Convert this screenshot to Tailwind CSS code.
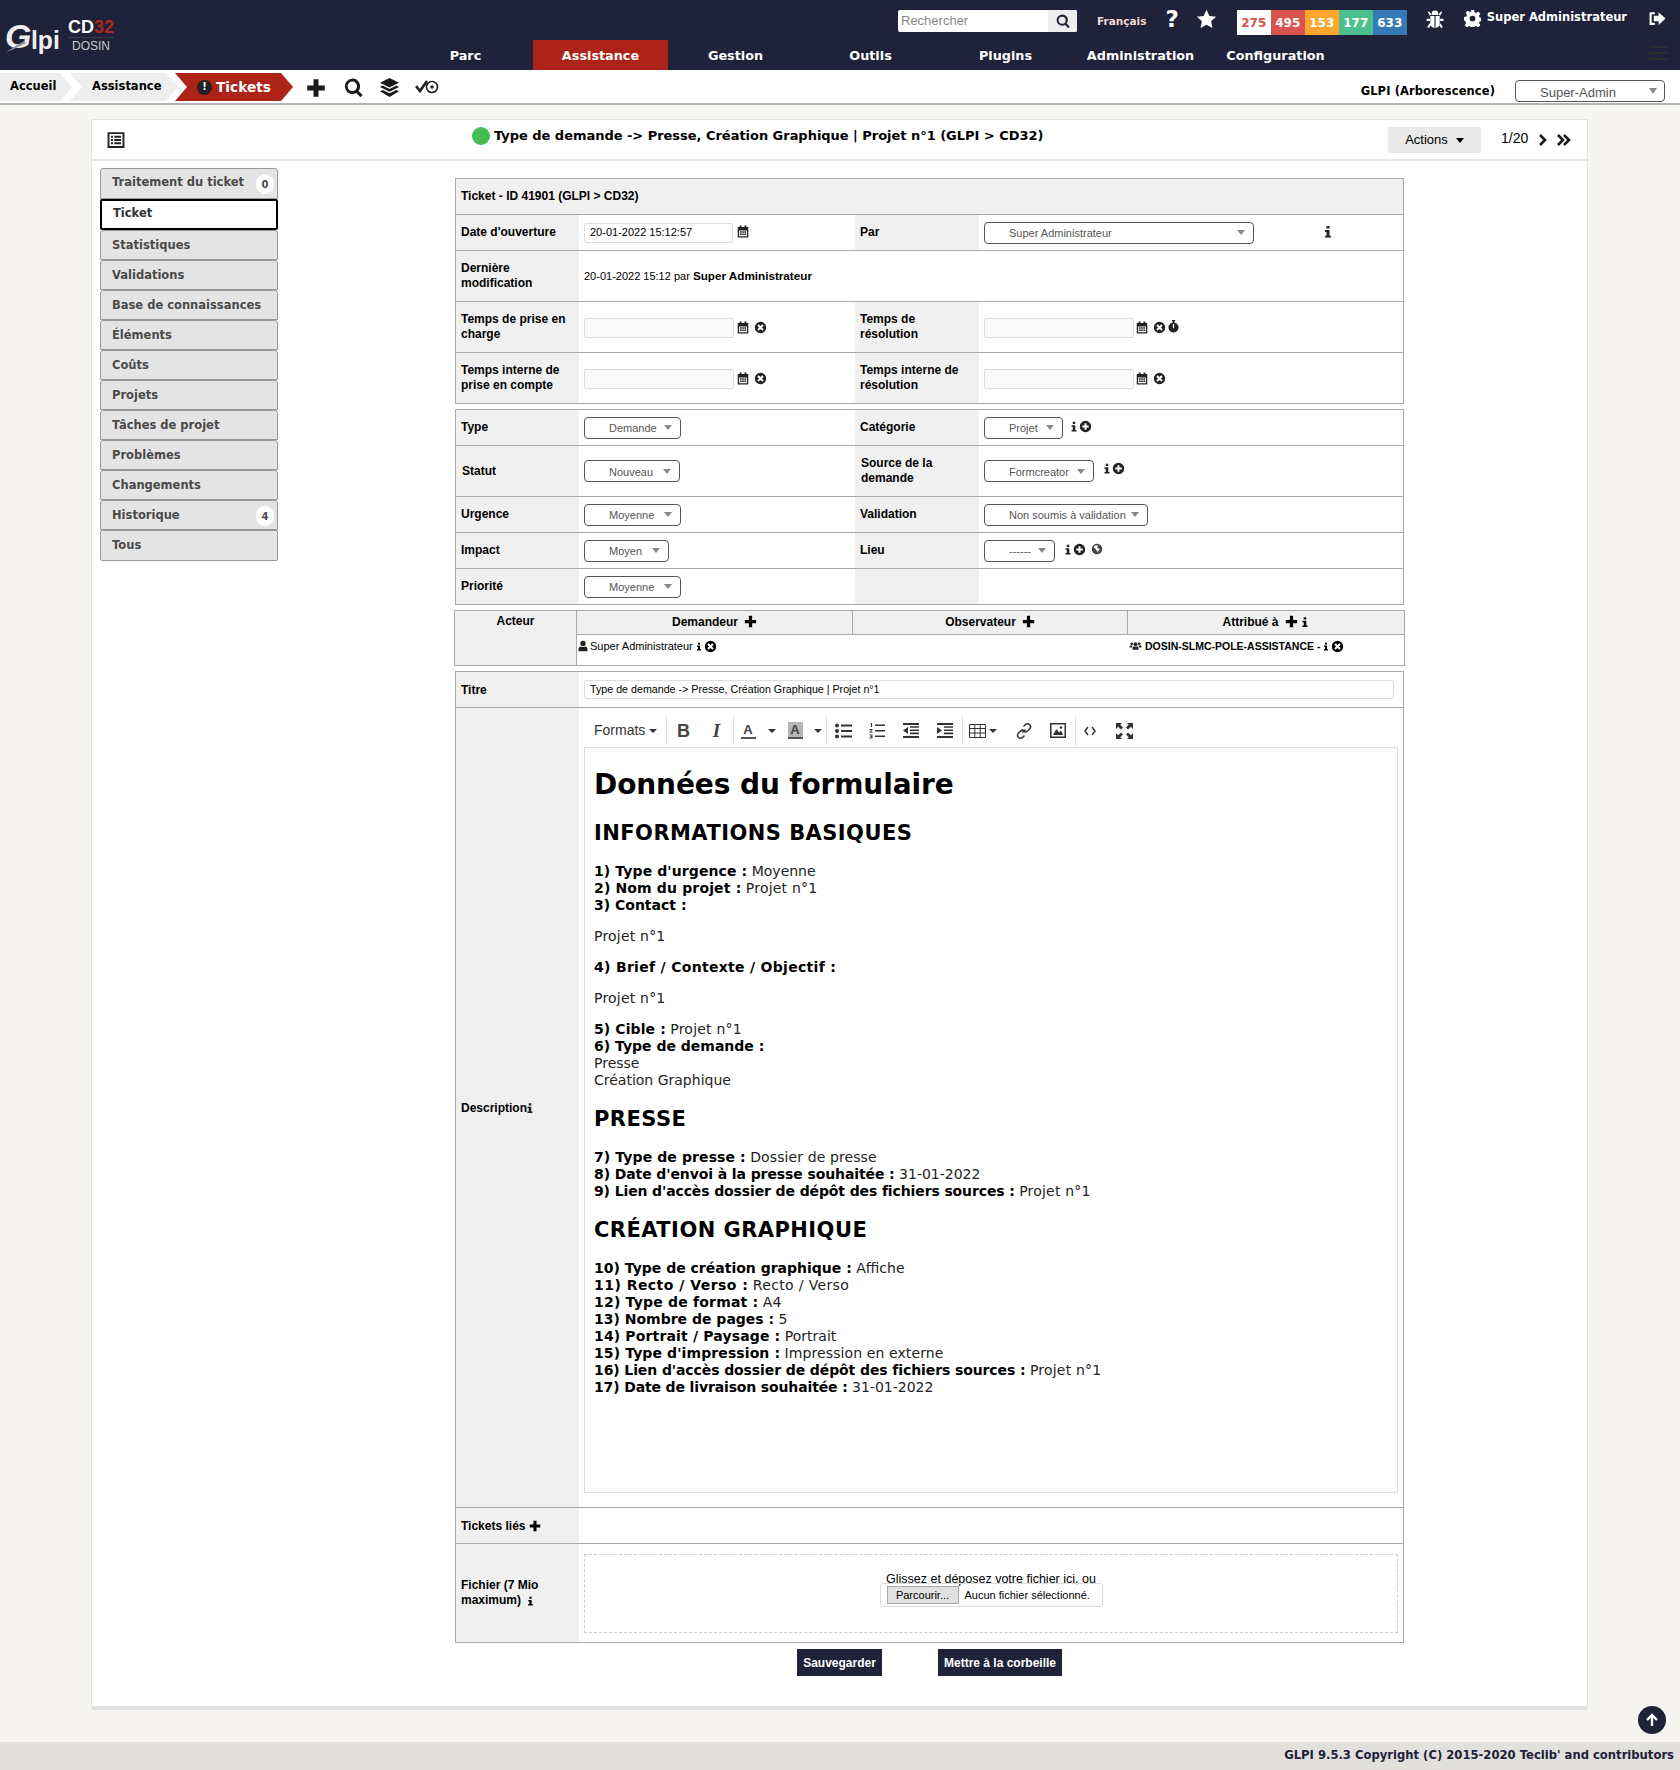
<!DOCTYPE html>
<html lang="fr">
<head>
    <meta charset="UTF-8">
    <meta name="viewport" content="width=device-width, initial-scale=1.0">
    <script src="https://cdn.jsdelivr.net/npm/@tailwindcss/browser@4"></script>
    <title>Ticket - GLPI</title>
</head>
<body class="bg-[#f6f5f2] [font-family:'Liberation_Sans',Arial,sans-serif] text-[12px] text-black h-[1770px] relative overflow-hidden">

    <!-- icon set -->
    <svg class="hidden">
        <symbol id="i-plus" viewBox="0 0 16 16"><path d="M6 1h4v5h5v4h-5v5H6v-5H1V6h5z"/></symbol>
        <symbol id="i-info" viewBox="0 0 16 16"><path d="M6 0.500h4v3.500H6zM4 6h6v7.500h2V16H4v-2.500h2V8.500H4z"/></symbol>
        <symbol id="i-plus-c" viewBox="0 0 16 16"><path fill-rule="evenodd" d="M8 1a7 7 0 1 1 0 14A7 7 0 0 1 8 1zM6.800 4v2.800H4v2.400h2.800V12h2.400V9.200H12V6.800H9.200V4z"/></symbol>
        <symbol id="i-x-c" viewBox="0 0 16 16"><path fill-rule="evenodd" d="M8 1a7 7 0 1 1 0 14A7 7 0 0 1 8 1zM5.700 4L4 5.700 6.300 8 4 10.300 5.700 12 8 9.700 10.300 12 12 10.300 9.700 8 12 5.700 10.300 4 8 6.300z"/></symbol>
        <symbol id="i-cal" viewBox="0 0 16 16"><path fill-rule="evenodd" d="M3.500 0h2.500v2h4V0h2.500v2H15v14H1V2h2.500zM2.800 6.500v7.700h10.400V6.500zM4 7.800h2.200v1.800H4zM6.900 7.800h2.200v1.800H6.900zM9.800 7.800H12v1.800H9.800zM4 10.800h2.200v1.800H4zM6.900 10.800h2.200v1.800H6.900zM9.800 10.800H12v1.800H9.800z"/></symbol>
        <symbol id="i-watch" viewBox="0 0 16 16"><path fill-rule="evenodd" d="M6 0h4v1.500H9v1.600A6.200 6.200 0 1 1 7 3.100V1.500H6zM7.200 5v5h1.600V5z"/></symbol>
        <symbol id="i-globe" viewBox="0 0 16 16"><path fill-rule="evenodd" d="M8 1a7 7 0 1 1 0 14A7 7 0 0 1 8 1zM5 3.500L3.500 6 6 7.500l1 2 1.500 1v2l2-2.500 1.500-2-2.500-1L8 6 9.500 4 8 3z"/></symbol>
        <symbol id="i-user" viewBox="0 0 16 16"><circle cx="8" cy="4.500" r="3.500"/><path d="M2 15v-3c0-2.500 2-3.500 3.500-3.500 1.500 1 3.500 1 5 0C12 8.500 14 9.500 14 12v3z"/></symbol>
        <symbol id="i-users" viewBox="0 0 16 16"><circle cx="8" cy="5.500" r="2.600"/><circle cx="3" cy="5" r="1.800"/><circle cx="13" cy="5" r="1.800"/><path d="M4 13v-2.500C4 9 5.200 8.500 6 8.500h4c.8 0 2 .5 2 2V13zM0 10V8.500C0 7.500.8 7.200 1.500 7.200H4L3 10zM16 10V8.500c0-1-.8-1.300-1.500-1.300H12l1 2.800z"/></symbol>
        <symbol id="i-search" viewBox="0 0 16 16"><path fill-rule="evenodd" d="M7 0.500a6.500 6.500 0 0 1 5.200 10.400l3.500 3.500-1.800 1.800-3.500-3.500A6.500 6.500 0 1 1 7 0.500zM7 3a4 4 0 1 0 0 8 4 4 0 0 0 0-8z"/></symbol>
        <symbol id="i-layers" viewBox="0 0 16 16"><path d="M8 0l8 4-8 4-8-4zM2.200 6.300L8 9.200l5.800-2.900L16 7.500l-8 4-8-4zM2.200 10L8 12.900l5.800-2.900 2.200 1.200-8 4.800-8-4.800z"/></symbol>
        <symbol id="i-list" viewBox="0 0 16 16"><path fill-rule="evenodd" d="M0.500 1h15v14h-15zM2.200 2.700v10.600h11.600V2.700zM3.500 4.200h1.800V6H3.500zM6.500 4.200h6V6h-6zM3.500 7.100h1.800v1.800H3.500zM6.500 7.100h6v1.800h-6zM3.500 10h1.800v1.800H3.500zM6.500 10h6v1.800h-6z"/></symbol>
        <symbol id="i-star" viewBox="0 0 16 16"><path d="M8 0.500l2.300 5 5.400.6-4 3.700 1.100 5.400L8 12.500l-4.800 2.700 1.100-5.400-4-3.700 5.400-.6z"/></symbol>
        <symbol id="i-bug" viewBox="0 0 16 16"><path d="M5 3.500a3 3 0 0 1 6 0V4.500H5zM3.800 5.300h3.700V16C5.300 16 3.800 14 3.800 12zM8.500 5.300h3.700V12c0 2-1.500 4-3.700 4zM1.500 1.500h1.500l1.800 2.500-1.400 1zM14.500 1.500H13L11.200 4l1.400 1zM0.500 7.700h3v2h-3zM12.500 7.700h3v2h-3zM1 15l2.300-3.300 1.200 1.300-2 3zM15 15l-2.300-3.300-1.200 1.300 2 3z"/></symbol>
        <symbol id="i-cog" viewBox="0 0 16 16"><path fill-rule="evenodd" d="M6.500 0h3l.4 2.200 1.500.6L13.300 1.500l2.100 2.100-1.300 1.900.6 1.500 2.200.4v3l-2.200.4-.6 1.500 1.300 1.900-2.100 2.100-1.900-1.300-1.500.6-.4 2.200h-3l-.4-2.200-1.500-.6-1.900 1.300L.6 14.300l1.300-1.900-.6-1.500L0 9.500v-3l2.200-.4.6-1.500L1.500 2.700l2.100-2.100 1.900 1.300 1.500-.6zM8 5.300a2.700 2.700 0 1 0 0 5.400 2.700 2.700 0 0 0 0-5.400z"/></symbol>
        <symbol id="i-out" viewBox="0 0 16 16"><path d="M6 2v2H3v8h3v2H1V2zM9.500 2L16 8l-6.500 6v-3.500H5v-5h4.500z"/></symbol>
    </svg>

    <!-- top bar -->
    <header class="relative h-[70px] bg-[#1f2238] [font-family:'DejaVu_Sans',sans-serif] text-white">
        <div class="absolute left-[5px] top-[17px] flex items-center">
            <div class="relative [font-family:'Liberation_Sans',sans-serif] text-[#eeeeee] leading-none flex items-end w-[63px]">
                <span class="text-[34px] font-bold italic">G</span><span class="text-[26px] font-bold origin-left scale-x-[0.95]">lpi</span>
                <svg class="absolute left-[1px] top-[22px] w-[20px] h-[12px]" viewBox="0 0 20 12"><path d="M0 11L18 0 20 2 6 9z" fill="#8a8c98"/></svg>
            </div>
            <div class="flex flex-col items-center w-[46px] [font-family:'Liberation_Sans',sans-serif]">
                <span class="text-[18px] font-bold leading-[20px] border-b border-[#3a3e55] w-full text-center">CD<span class="text-[#ad2a1e]">32</span></span>
                <span class="text-[12px] leading-[17px] text-[#c8c8c8]">DOSIN</span>
            </div>
        </div>

        <div class="flex h-[40px] items-start pl-[898px]">
            <div class="mt-[10px] flex h-[22px] w-[179px] rounded-[2px] overflow-hidden bg-white">
                <span class="flex-1 pl-[3px] [font-family:'Liberation_Sans',sans-serif] text-[13px] leading-[22px] text-[#888888]">Rechercher</span>
                <span class="flex w-[29px] items-center justify-center bg-[#eeeeee]"><svg class="w-[14px] h-[14px] fill-[#1f2238]"><use href="#i-search"/></svg></span>
            </div>
            <span class="ml-[20px] mt-[15px] text-[10.500px] font-bold leading-[13px] text-[#f5d8cf]">Français</span>
            <span class="ml-[19px] mt-[6px] text-[23px] font-bold leading-[26px]">?</span>
            <svg class="ml-[17px] mt-[9px] w-[21px] h-[20px] fill-white"><use href="#i-star"/></svg>
            <div class="ml-[20px] mt-[10px] flex h-[25px] text-[12px] font-bold leading-[26px] text-center">
                <span class="w-[34px] bg-white text-[#d9534f]">275</span>
                <span class="w-[34px] bg-[#d9534f]">495</span>
                <span class="w-[34px] bg-[#ffa72c]">153</span>
                <span class="w-[34px] bg-[#4cbf8f]">177</span>
                <span class="w-[34px] bg-[#337ab7]">633</span>
            </div>
            <svg class="ml-[19px] mt-[10px] w-[18px] h-[18px] fill-white"><use href="#i-bug"/></svg>
            <svg class="ml-[20px] mt-[10px] w-[17px] h-[17px] fill-white"><use href="#i-cog"/></svg>
            <span class="ml-[6px] mt-[10px] text-[11.500px] font-bold leading-[14px]">Super Administrateur</span>
            <svg class="ml-[21px] mt-[10px] w-[18px] h-[17px] fill-white"><use href="#i-out"/></svg>
        </div>

        <nav class="flex h-[30px] pl-[398px] text-[12.800px] font-bold leading-[31px] text-center">
            <a class="w-[135px]">Parc</a>
            <a class="w-[135px] bg-[#ad2318]">Assistance</a>
            <a class="w-[135px]">Gestion</a>
            <a class="w-[135px]">Outils</a>
            <a class="w-[135px]">Plugins</a>
            <a class="w-[135px]">Administration</a>
            <a class="w-[135px]">Configuration</a>
        </nav>
        <div class="absolute left-[1650px] top-[46px] flex w-[18px] flex-col gap-[4px]">
            <span class="h-[2px] bg-[#2c2c2c]"></span>
            <span class="h-[2px] bg-[#2c2c2c]"></span>
            <span class="h-[2px] bg-[#2c2c2c]"></span>
        </div>
    </header>

    <!-- breadcrumb -->
    <div class="flex h-[35px] items-start border-b-2 border-[#b4b4b4] bg-white [font-family:'DejaVu_Sans',sans-serif]">
        <div class="mt-[3px] flex h-[28px] items-center text-[11.500px] font-bold">
            <a class="flex h-full w-[72px] items-center bg-[#eeeeee] pl-[10px] [clip-path:polygon(0_0,60px_0,72px_50%,60px_100%,0_100%)]">Accueil</a>
            <a class="-ml-[2px] flex h-full w-[108px] items-center bg-[#eeeeee] pl-[22px] [clip-path:polygon(0_0,96px_0,108px_50%,96px_100%,0_100%,12px_50%)]">Assistance</a>
            <a class="-ml-[3px] flex h-full w-[118px] items-center bg-[#ad2318] pl-[22px] text-[13.700px] text-white [clip-path:polygon(0_0,106px_0,118px_50%,106px_100%,0_100%,12px_50%)]">
                <span class="mr-[4px] flex h-[15px] w-[15px] items-center justify-center rounded-full bg-[#222222] text-[10px] leading-none">!</span>Tickets
            </a>
        </div>
        <svg class="ml-[13px] mt-[8px] w-[20px] h-[20px] fill-[#1a1a1a]"><use href="#i-plus"/></svg>
        <svg class="ml-[18px] mt-[8px] w-[19px] h-[19px] fill-[#1a1a1a]"><use href="#i-search"/></svg>
        <svg class="ml-[17px] mt-[8px] w-[19px] h-[19px] fill-[#1a1a1a]"><use href="#i-layers"/></svg>
        <svg class="ml-[16px] mt-[10px] w-[24px] h-[14px]" viewBox="0 0 24 14"><path d="M1 6l4 5 7-10" fill="none" stroke="#222" stroke-width="2.600"/><circle cx="17" cy="7" r="5.500" fill="none" stroke="#222" stroke-width="1.600"/><circle cx="17" cy="7" r="1.800" fill="#222"/></svg>
        <span class="ml-auto mt-[14px] text-[11.500px] font-bold leading-[14px] tracking-[0.1px]">GLPI (Arborescence)</span>
        <div class="ml-[20px] mr-[15px] mt-[10px] flex h-[22px] w-[150px] items-center justify-between rounded-[4px] border border-[#555555] pl-[24px] pr-[7px] pt-[3px] [font-family:'Liberation_Sans',sans-serif] text-[13px] text-[#555555]">
            Super-Admin<span class="-mt-[4px] h-0 w-0 border-x-[4px] border-t-[6px] border-x-transparent border-t-[#888888]"></span>
        </div>
    </div>

    <!-- main card -->
    <main class="ml-[91px] mt-[14px] w-[1497px] h-[1591px] border-x border-t border-[#e4e4e4] bg-white border-b-[4px] border-b-[#e0e0e0] rounded-b-[2px]">
        <div class="relative flex h-[41px] border-b-2 border-[#e8e8e8]">
            <svg class="ml-[15px] mt-[11px] w-[18px] h-[18px] fill-[#222222]"><use href="#i-list"/></svg>
            <div class="ml-[347px] mt-[6px] flex items-start [font-family:'DejaVu_Sans',sans-serif] text-[13px] font-bold leading-[20px] tracking-[-0.03px]">
                <span class="mr-[4px] mt-[1px] h-[18px] w-[18px] rounded-full bg-[#45bd52]"></span>Type de demande -&gt; Presse, Création Graphique | Projet n°1 (GLPI &gt; CD32)
            </div>
            <div class="ml-auto mr-[106px] mt-[7px] flex h-[26px] w-[93px] items-center justify-center gap-[8px] rounded-[2px] bg-[#e9e9e9] text-[13px]">
                Actions<span class="h-0 w-0 border-x-[4px] border-t-[5px] border-x-transparent border-t-black"></span>
            </div>
            <div class="absolute left-[1409px] top-[11px] flex items-center text-[14px] leading-[15px]">
                1/20
                <svg class="ml-[10px] mt-[2px] w-[9px] h-[12px]" viewBox="0 0 9 12" fill="none" stroke="#1a1a1a" stroke-width="2.600"><path d="M2 1l5 5-5 5"/></svg>
                <svg class="ml-[9px] mt-[2px] w-[15px] h-[12px]" viewBox="0 0 15 12" fill="none" stroke="#1a1a1a" stroke-width="2.600"><path d="M2 1l5 5-5 5M8 1l5 5-5 5"/></svg>
            </div>
        </div>

        <div class="flex items-start">
            <!-- left tabs -->
            <ul class="ml-[8px] mt-[7px] w-[178px] [font-family:'DejaVu_Sans',sans-serif] text-[11.500px] font-bold text-[#4a4a4a]">
                <li class="flex h-[31px] items-start justify-between rounded-t-[3px] border border-[#999999] bg-[#e4e4e4] pl-[11px] pr-[3px] pt-[5px]">Traitement du ticket<span class="mt-0 flex h-[20px] w-[18px] items-center justify-center rounded-[9px] bg-white text-[10px]">0</span></li>
                <li class="h-[31px] rounded-[2px] border-2 border-black bg-white pl-[11px] pt-[4px] text-[#333333]">Ticket</li>
                <li class="h-[30px] rounded-t-[3px] border border-[#999999] bg-[#e4e4e4] pl-[11px] pt-[6px]">Statistiques</li>
                <li class="h-[30px] rounded-t-[3px] border border-[#999999] bg-[#e4e4e4] pl-[11px] pt-[6px]">Validations</li>
                <li class="h-[30px] rounded-t-[3px] border border-[#999999] bg-[#e4e4e4] pl-[11px] pt-[6px]">Base de connaissances</li>
                <li class="h-[30px] rounded-t-[3px] border border-[#999999] bg-[#e4e4e4] pl-[11px] pt-[6px]">Éléments</li>
                <li class="h-[30px] rounded-t-[3px] border border-[#999999] bg-[#e4e4e4] pl-[11px] pt-[6px]">Coûts</li>
                <li class="h-[30px] rounded-t-[3px] border border-[#999999] bg-[#e4e4e4] pl-[11px] pt-[6px]">Projets</li>
                <li class="h-[30px] rounded-t-[3px] border border-[#999999] bg-[#e4e4e4] pl-[11px] pt-[6px]">Tâches de projet</li>
                <li class="h-[30px] rounded-t-[3px] border border-[#999999] bg-[#e4e4e4] pl-[11px] pt-[6px]">Problèmes</li>
                <li class="h-[30px] rounded-t-[3px] border border-[#999999] bg-[#e4e4e4] pl-[11px] pt-[6px]">Changements</li>
                <li class="flex h-[30px] items-start justify-between rounded-t-[3px] border border-[#999999] bg-[#e4e4e4] pl-[11px] pr-[3px] pt-[6px]">Historique<span class="-mt-[1px] flex h-[20px] w-[18px] items-center justify-center rounded-[9px] bg-white text-[10px]">4</span></li>
                <li class="h-[31px] rounded-[2px] border border-[#999999] bg-[#e4e4e4] pl-[11px] pt-[6px]">Tous</li>
            </ul>

            <!-- form -->
            <div class="ml-[177px] mt-[17px] flex w-[949px] flex-col font-bold">
                <!-- dates -->
                <section class="border border-[#aaaaaa]">
                    <div class="flex h-[36px] items-center border-b border-[#aaaaaa] bg-[#f0f0f0] pb-[2px] pl-[5px]">Ticket - ID 41901 (GLPI &gt; CD32)</div>
                    <div class="grid h-[36px] grid-cols-[123px_276px_124px_1fr] border-b border-[#aaaaaa]">
                        <div class="flex items-center bg-[#f0f0f0] pb-[2px] pl-[5px]">Date d'ouverture</div>
                        <div class="flex items-center pl-[5px] font-normal">
                            <span class="flex h-[20px] w-[149px] items-center rounded-[2px] border border-[#dddddd] pl-[5px] text-[11px]">20-01-2022 15:12:57</span>
                            <svg class="ml-[4px] -mt-[2px] w-[12px] h-[13px] fill-[#222222]"><use href="#i-cal"/></svg>
                        </div>
                        <div class="flex items-center bg-[#f0f0f0] pb-[2px] pl-[5px]">Par</div>
                        <div class="relative flex items-center pl-[5px] font-normal">
                            <span class="flex h-[22px] w-[270px] items-center justify-between rounded-[4px] border border-[#555555] pl-[24px] pr-[8px] text-[11px] text-[#555555]"><span class="pt-[2px]">Super Administrateur</span><span class="h-0 w-0 border-x-[4px] border-t-[5px] border-x-transparent border-t-[#888888]"></span></span>
                            <svg class="ml-[68px] -mt-[2px] w-[12px] h-[13px] fill-[#222222]"><use href="#i-info"/></svg>
                        </div>
                    </div>
                    <div class="grid h-[51px] grid-cols-[123px_1fr] border-b border-[#aaaaaa]">
                        <div class="flex items-center bg-[#f0f0f0] pl-[5px] leading-[15px]">Dernière<br>modification</div>
                        <div class="flex items-center pl-[5px] text-[11px] font-normal">20-01-2022 15:12 par&nbsp;<b class="text-[11.700px]">Super Administrateur</b></div>
                    </div>
                    <div class="grid h-[51px] grid-cols-[123px_276px_124px_1fr] border-b border-[#aaaaaa]">
                        <div class="flex items-center bg-[#f0f0f0] pl-[5px] leading-[15px]">Temps de prise en charge</div>
                        <div class="flex items-center pl-[5px]">
                            <span class="mt-[2px] h-[20px] w-[150px] rounded-[2px] border border-[#dddddd] bg-[#fafafa]"></span>
                            <svg class="ml-[3px] w-[12px] h-[13px] fill-[#222222]"><use href="#i-cal"/></svg>
                            <svg class="ml-[5px] w-[13px] h-[13px] fill-[#222222]"><use href="#i-x-c"/></svg>
                        </div>
                        <div class="flex items-center bg-[#f0f0f0] pl-[5px] leading-[15px]">Temps de<br>résolution</div>
                        <div class="flex items-center pl-[5px]">
                            <span class="mt-[2px] h-[20px] w-[150px] rounded-[2px] border border-[#dddddd] bg-[#fafafa]"></span>
                            <svg class="ml-[2px] w-[12px] h-[13px] fill-[#222222]"><use href="#i-cal"/></svg>
                            <svg class="ml-[5px] w-[13px] h-[13px] fill-[#222222]"><use href="#i-x-c"/></svg>
                            <svg class="ml-[1px] -mt-[1px] w-[13px] h-[15px] fill-[#222222]"><use href="#i-watch"/></svg>
                        </div>
                    </div>
                    <div class="grid h-[50px] grid-cols-[123px_276px_124px_1fr]">
                        <div class="flex items-center bg-[#f0f0f0] pl-[5px] leading-[15px]">Temps interne de prise en compte</div>
                        <div class="flex items-center pl-[5px]">
                            <span class="mt-[2px] h-[20px] w-[150px] rounded-[2px] border border-[#dddddd] bg-[#fafafa]"></span>
                            <svg class="ml-[3px] w-[12px] h-[13px] fill-[#222222]"><use href="#i-cal"/></svg>
                            <svg class="ml-[5px] w-[13px] h-[13px] fill-[#222222]"><use href="#i-x-c"/></svg>
                        </div>
                        <div class="flex items-center bg-[#f0f0f0] pl-[5px] leading-[15px]">Temps interne de<br>résolution</div>
                        <div class="flex items-center pl-[5px]">
                            <span class="mt-[2px] h-[20px] w-[150px] rounded-[2px] border border-[#dddddd] bg-[#fafafa]"></span>
                            <svg class="ml-[2px] w-[12px] h-[13px] fill-[#222222]"><use href="#i-cal"/></svg>
                            <svg class="ml-[5px] w-[13px] h-[13px] fill-[#222222]"><use href="#i-x-c"/></svg>
                        </div>
                    </div>
                </section>

                <!-- status -->
                <section class="mt-[5px] border border-[#aaaaaa]">
                    <div class="grid h-[36px] grid-cols-[123px_276px_124px_1fr] border-b border-[#aaaaaa]">
                        <div class="flex items-center bg-[#f0f0f0] pb-[2px] pl-[5px]">Type</div>
                        <div class="flex items-center pl-[5px] font-normal">
                            <span class="flex h-[22px] w-[97px] items-center justify-between rounded-[4px] border border-[#555555] pl-[24px] pr-[8px] text-[11px] text-[#555555]"><span class="pt-[2px]">Demande</span><span class="h-0 w-0 border-x-[4px] border-t-[5px] border-x-transparent border-t-[#888888]"></span></span>
                        </div>
                        <div class="flex items-center bg-[#f0f0f0] pb-[2px] pl-[5px]">Catégorie</div>
                        <div class="flex items-center pl-[5px] font-normal">
                            <span class="flex h-[22px] w-[79px] items-center justify-between rounded-[4px] border border-[#555555] pl-[24px] pr-[8px] text-[11px] text-[#555555]"><span class="pt-[2px]">Projet</span><span class="h-0 w-0 border-x-[4px] border-t-[5px] border-x-transparent border-t-[#888888]"></span></span>
                            <svg class="ml-[6px] -mt-[3px] w-[10px] h-[13px] fill-[#222222]"><use href="#i-info"/></svg>
                            <svg class="-mt-[3px] w-[13px] h-[13px] fill-[#222222]"><use href="#i-plus-c"/></svg>
                        </div>
                    </div>
                    <div class="grid h-[51px] grid-cols-[123px_276px_124px_1fr] border-b border-[#aaaaaa]">
                        <div class="flex items-center bg-[#f0f0f0] pl-[6px]">Statut</div>
                        <div class="flex items-center pl-[5px] font-normal">
                            <span class="flex h-[22px] w-[96px] items-center justify-between rounded-[4px] border border-[#555555] pl-[24px] pr-[8px] text-[11px] text-[#555555]"><span class="pt-[2px]">Nouveau</span><span class="h-0 w-0 border-x-[4px] border-t-[5px] border-x-transparent border-t-[#888888]"></span></span>
                        </div>
                        <div class="flex items-center bg-[#f0f0f0] pl-[6px] leading-[15px]">Source de la<br>demande</div>
                        <div class="flex items-center pl-[5px] font-normal">
                            <span class="flex h-[22px] w-[110px] items-center justify-between rounded-[4px] border border-[#555555] pl-[24px] pr-[8px] text-[11px] text-[#555555]"><span class="pt-[2px]">Formcreator</span><span class="h-0 w-0 border-x-[4px] border-t-[5px] border-x-transparent border-t-[#888888]"></span></span>
                            <svg class="ml-[8px] -mt-[5px] w-[10px] h-[13px] fill-[#222222]"><use href="#i-info"/></svg>
                            <svg class="-mt-[5px] w-[13px] h-[13px] fill-[#222222]"><use href="#i-plus-c"/></svg>
                        </div>
                    </div>
                    <div class="grid h-[36px] grid-cols-[123px_276px_124px_1fr] border-b border-[#aaaaaa]">
                        <div class="flex items-center bg-[#f0f0f0] pb-[2px] pl-[5px]">Urgence</div>
                        <div class="flex items-center pl-[5px] font-normal">
                            <span class="flex h-[22px] w-[97px] items-center justify-between rounded-[4px] border border-[#555555] pl-[24px] pr-[8px] text-[11px] text-[#555555]"><span class="pt-[2px]">Moyenne</span><span class="h-0 w-0 border-x-[4px] border-t-[5px] border-x-transparent border-t-[#888888]"></span></span>
                        </div>
                        <div class="flex items-center bg-[#f0f0f0] pb-[2px] pl-[5px]">Validation</div>
                        <div class="flex items-center pl-[5px] font-normal">
                            <span class="flex h-[22px] w-[164px] items-center justify-between whitespace-nowrap rounded-[4px] border border-[#555555] pl-[24px] pr-[8px] text-[11px] text-[#555555]"><span class="pt-[2px]">Non soumis à validation</span><span class="h-0 w-0 border-x-[4px] border-t-[5px] border-x-transparent border-t-[#888888]"></span></span>
                        </div>
                    </div>
                    <div class="grid h-[36px] grid-cols-[123px_276px_124px_1fr] border-b border-[#aaaaaa]">
                        <div class="flex items-center bg-[#f0f0f0] pb-[2px] pl-[5px]">Impact</div>
                        <div class="flex items-center pl-[5px] font-normal">
                            <span class="flex h-[22px] w-[85px] items-center justify-between rounded-[4px] border border-[#555555] pl-[24px] pr-[8px] text-[11px] text-[#555555]"><span class="pt-[2px]">Moyen</span><span class="h-0 w-0 border-x-[4px] border-t-[5px] border-x-transparent border-t-[#888888]"></span></span>
                        </div>
                        <div class="flex items-center bg-[#f0f0f0] pb-[2px] pl-[5px]">Lieu</div>
                        <div class="flex items-center pl-[5px] font-normal">
                            <span class="flex h-[22px] w-[71px] items-center justify-between rounded-[4px] border border-[#555555] pl-[24px] pr-[8px] text-[11px] text-[#555555]"><span class="pt-[2px]">------</span><span class="h-0 w-0 border-x-[4px] border-t-[5px] border-x-transparent border-t-[#888888]"></span></span>
                            <svg class="ml-[8px] -mt-[3px] w-[10px] h-[13px] fill-[#222222]"><use href="#i-info"/></svg>
                            <svg class="-mt-[3px] w-[13px] h-[13px] fill-[#222222]"><use href="#i-plus-c"/></svg>
                            <svg class="ml-[5px] -mt-[3px] w-[12px] h-[12px] fill-[#444444]"><use href="#i-globe"/></svg>
                        </div>
                    </div>
                    <div class="grid h-[35px] grid-cols-[123px_276px_124px_1fr]">
                        <div class="flex items-center bg-[#f0f0f0] pb-[2px] pl-[5px]">Priorité</div>
                        <div class="flex items-center pl-[5px] font-normal">
                            <span class="flex h-[22px] w-[97px] items-center justify-between rounded-[4px] border border-[#555555] pl-[24px] pr-[8px] text-[11px] text-[#555555]"><span class="pt-[2px]">Moyenne</span><span class="h-0 w-0 border-x-[4px] border-t-[5px] border-x-transparent border-t-[#888888]"></span></span>
                        </div>
                        <div class="bg-[#f0f0f0]"></div>
                        <div></div>
                    </div>
                </section>

                <!-- actors -->
                <section class="mt-[5px] -mx-[1px] grid h-[56px] grid-cols-[122px_276px_275px_1fr] grid-rows-[24px_1fr] border border-[#aaaaaa]">
                    <div class="row-span-2 border-r border-[#aaaaaa] bg-[#f0f0f0] pt-[1px] text-center">Acteur</div>
                    <div class="flex items-center justify-center gap-[6px] border-r border-b border-[#aaaaaa] bg-[#f0f0f0] pb-[2px]">Demandeur <svg class="w-[13px] h-[13px]"><use href="#i-plus"/></svg></div>
                    <div class="flex items-center justify-center gap-[6px] border-r border-b border-[#aaaaaa] bg-[#f0f0f0] pb-[2px]">Observateur <svg class="w-[13px] h-[13px]"><use href="#i-plus"/></svg></div>
                    <div class="flex items-center justify-center gap-[6px] border-b border-[#aaaaaa] bg-[#f0f0f0] pb-[2px]">Attribué à <svg class="w-[13px] h-[13px]"><use href="#i-plus"/></svg><svg class="-ml-[4px] w-[10px] h-[12px]"><use href="#i-info"/></svg></div>
                    <div class="col-span-2 flex items-start pt-[4px] font-normal text-[11px] leading-[14px]">
                        <svg class="mt-[1px] mr-[1px] w-[12px] h-[12px] fill-[#222222]"><use href="#i-user"/></svg>Super Administrateur<svg class="ml-[2px] mt-[1px] w-[8px] h-[13px]"><use href="#i-info"/></svg><svg class="ml-[1px] mt-[1px] w-[13px] h-[13px]"><use href="#i-x-c"/></svg>
                    </div>
                    <div class="flex items-start pt-[4px] text-[10.500px] leading-[14px]">
                        <svg class="mt-[1px] mr-[2px] w-[15px] h-[12px] fill-[#222222]"><use href="#i-users"/></svg>DOSIN-SLMC-POLE-ASSISTANCE -<svg class="ml-[2px] mt-[1px] w-[8px] h-[13px]"><use href="#i-info"/></svg><svg class="ml-[1px] mt-[1px] w-[13px] h-[13px]"><use href="#i-x-c"/></svg>
                    </div>
                </section>

                <!-- description -->
                <section class="mt-[5px] border border-[#aaaaaa]">
                    <div class="grid h-[36px] grid-cols-[123px_1fr] border-b border-[#aaaaaa]">
                        <div class="flex items-center bg-[#f0f0f0] pl-[5px]">Titre</div>
                        <div class="flex items-center pl-[5px] pr-[9px] font-normal">
                            <span class="flex h-[19px] w-full items-center rounded-[2px] border border-[#dddddd] pl-[5px] text-[10.700px]">Type de demande -&gt; Presse, Création Graphique | Projet n°1</span>
                        </div>
                    </div>
                    <div class="grid h-[800px] grid-cols-[123px_1fr] border-b border-[#aaaaaa]">
                        <div class="flex items-center bg-[#f0f0f0] pl-[5px]">Description<svg class="ml-[-2px] w-[10px] h-[14px] fill-[#222222]"><use href="#i-info"/></svg></div>
                        <div class="pl-[5px] pr-[5px] font-normal">
                            <div class="flex h-[39px] items-center pt-[6px] text-[#444444]">
                                <span class="ml-[10px] flex w-[72px] items-center gap-[4px] text-[14px] text-[#333333]">Formats<span class="h-0 w-0 border-x-[4px] border-t-[4px] border-x-transparent border-t-[#333333]"></span></span>
                                <span class="h-[28px] w-px bg-[#dddddd]"></span>
                                <span class="w-[33px] text-center text-[18px] leading-[20px] font-bold text-[#444444]">B</span>
                                <span class="w-[33px] text-center text-[19px] leading-[20px] italic font-bold text-[#444444] [font-family:'Liberation_Serif',serif]">I</span>
                                <span class="h-[28px] w-px bg-[#dddddd]"></span>
                                <span class="w-[28px] flex justify-center"><span class="w-[15px] border-b-2 border-[#555555] text-center text-[13px] font-bold leading-[15px]">A</span></span>
                                <span class="w-[19px] flex justify-center"><span class="h-0 w-0 border-x-[4px] border-t-[4px] border-x-transparent border-t-[#333333]"></span></span>
                                <span class="w-[28px] flex justify-center"><span class="w-[15px] border-b-2 border-[#555555] bg-[#b5b5b5] text-center text-[13px] font-bold leading-[15px]">A</span></span>
                                <span class="w-[17px] flex justify-center"><span class="h-0 w-0 border-x-[4px] border-t-[4px] border-x-transparent border-t-[#333333]"></span></span>
                                <span class="h-[28px] w-px bg-[#dddddd]"></span>
                                <svg class="mx-[8px] w-[17px] h-[16px]" viewBox="0 0 17 16" fill="#333"><circle cx="2" cy="2.500" r="2"/><circle cx="2" cy="8" r="2"/><circle cx="2" cy="13.500" r="2"/><path d="M6 1.500h11v2H6zM6 7h11v2H6zM6 12.500h11v2H6z"/></svg>
                                <svg class="mx-[9px] w-[16px] h-[16px]" viewBox="0 0 16 16" fill="#333"><path d="M6 1.500h10v1.600H6zM6 7h10v1.600H6zM6 12.500h10v1.600H6zM1.500 0h1.500v4H2V1H1.500zM.5 6h3v1l-2 1.500h2v1h-3v-1l2-1.500h-2zM.5 11.500h3v4h-3v-1h2v-.6h-1v-.8h1v-.6h-2z"/></svg>
                                <svg class="mx-[9px] w-[16px] h-[15px]" viewBox="0 0 16 15" fill="#333"><path d="M0 0h16v2H0zM7 3.200h9v1.600H7zM7 6.400h9V8H7zM7 9.600h9v1.600H7zM0 13h16v2H0zM5 4v7L0 7.500z"/></svg>
                                <svg class="mx-[9px] w-[16px] h-[15px]" viewBox="0 0 16 15" fill="#333"><path d="M0 0h16v2H0zM7 3.200h9v1.600H7zM7 6.400h9V8H7zM7 9.600h9v1.600H7zM0 13h16v2H0zM0 4v7l5-3.500z"/></svg>
                                <span class="h-[28px] w-px bg-[#dddddd]"></span>
                                <svg class="ml-[6px] w-[17px] h-[14px]" viewBox="0 0 17 14" fill="none" stroke="#333"><path d="M.5.500h16v13H.500zM.5 4.500h16M.5 9h16M5.800.5v13M11.200.5v13"/></svg>
                                <span class="ml-[3px] mr-[10px] h-0 w-0 border-x-[4px] border-t-[4px] border-x-transparent border-t-[#333333]"></span>
                                <svg class="mx-[9px] w-[16px] h-[16px]" viewBox="0 0 16 16" fill="none" stroke="#333" stroke-width="1.500"><path d="M6.500 9.500l3-3M7.500 3.500l2-2c1-1 3-1 4 0s1.500 3 0 4.500l-2 2c-1 1-2.500 1-3.500.2M8.500 12.500l-2 2c-1 1-3 1-4 0s-1.500-3 0-4.500l2-2c1-1 2.500-1 3.500-.2"/></svg>
                                <svg class="mx-[9px] w-[16px] h-[15px]" viewBox="0 0 16 15"><path fill-rule="evenodd" fill="#333" d="M0 0h16v15H0zM1.500 1.500v12h13v-12z"/><path fill="#333" d="M3 12l3.500-6 2.500 3.500 2-2 2 4.500z"/><circle cx="11" cy="4.500" r="1.200" fill="#333"/></svg>
                                <span class="h-[28px] w-px bg-[#dddddd]"></span>
                                <svg class="ml-[8px] mr-[9px] w-[12px] h-[10px]" viewBox="0 0 12 10" fill="none" stroke="#333" stroke-width="1.500"><path d="M4 1L1 5l3 4M8 1l3 4-3 4"/></svg>
                                <svg class="ml-[11px] w-[17px] h-[16px]" viewBox="0 0 17 16" fill="#333"><path d="M0 0h6L4.200 1.800 7 4.500 5 6.500 2.200 3.700 0 6zM17 0h-6l1.800 1.800L10 4.500l2 2 2.800-2.800L17 6zM0 16h6l-1.800-1.800L7 11.500l-2-2-2.800 2.800L0 10zM17 16h-6l1.800-1.800L10 11.500l2-2 2.800 2.800L17 10z"/></svg>
                            </div>
                            <div class="h-[746px] border border-[#dddddd] pl-[9px] pt-[1px] [font-family:'DejaVu_Sans',sans-serif] text-[14px] leading-[17px] text-[#222222]">
                                <h1 class="mt-[19px] text-[28px] font-bold leading-[34px] tracking-[-0.1px] text-black">Données du formulaire</h1>
                                <h2 class="mt-[19px] text-[21px] font-bold leading-[25px] tracking-[0.45px] text-black">INFORMATIONS BASIQUES</h2>
                                <p class="mt-[17px]"><b class="text-black tracking-[0.1px]">1) Type d'urgence :</b> Moyenne<br><b class="text-black tracking-[0.15px]">2) Nom du projet :</b> <span class="tracking-[0.2px]">Projet n°1</span><br><b class="text-black">3) Contact :</b></p>
                                <p class="mt-[14px] tracking-[0.2px]">Projet n°1</p>
                                <p class="mt-[14px]"><b class="text-black tracking-[0.3px]">4) Brief / Contexte / Objectif :</b></p>
                                <p class="mt-[14px] tracking-[0.2px]">Projet n°1</p>
                                <p class="mt-[14px]"><b class="text-black tracking-[0.1px]">5) Cible :</b> <span class="tracking-[0.2px]">Projet n°1</span><br><b class="text-black">6) Type de demande :</b><br>Presse<br>Création Graphique</p>
                                <h2 class="mt-[18px] text-[21px] font-bold leading-[25px] tracking-[0.45px] text-black">PRESSE</h2>
                                <p class="mt-[17px]"><b class="text-black tracking-[0.1px]">7) Type de presse :</b> <span class="tracking-[0.1px]">Dossier de presse</span><br><b class="text-black tracking-[-0.1px]">8) Date d'envoi à la presse souhaitée :</b> 31-01-2022<br><b class="text-black tracking-[-0.12px]">9) Lien d'accès dossier de dépôt des fichiers sources :</b> <span class="tracking-[0.2px]">Projet n°1</span></p>
                                <h2 class="mt-[18px] text-[21px] font-bold leading-[25px] tracking-[0.45px] text-black">CRÉATION GRAPHIQUE</h2>
                                <p class="mt-[17px]"><b class="text-black">10) Type de création graphique :</b> Affiche<br><b class="text-black tracking-[0.47px]">11) Recto / Verso :</b> <span class="tracking-[0.35px]">Recto / Verso</span><br><b class="text-black tracking-[0.2px]">12) Type de format :</b> A4<br><b class="text-black">13) Nombre de pages :</b> 5<br><b class="text-black tracking-[0.15px]">14) Portrait / Paysage :</b> Portrait<br><b class="text-black tracking-[0.1px]">15) Type d'impression :</b> <span class="tracking-[0.1px]">Impression en externe</span><br><b class="text-black tracking-[-0.1px]">16) Lien d'accès dossier de dépôt des fichiers sources :</b> <span class="tracking-[0.2px]">Projet n°1</span><br><b class="text-black tracking-[-0.14px]">17) Date de livraison souhaitée :</b> 31-01-2022</p>
                            </div>
                        </div>
                    </div>
                    <div class="grid h-[36px] grid-cols-[123px_1fr] border-b border-[#aaaaaa]">
                        <div class="flex items-center gap-[3px] bg-[#f0f0f0] pl-[5px]">Tickets liés <svg class="w-[12px] h-[12px]"><use href="#i-plus"/></svg></div>
                        <div></div>
                    </div>
                    <div class="grid h-[98px] grid-cols-[123px_1fr]">
                        <div class="flex items-center bg-[#f0f0f0] pl-[5px] leading-[15px]"><span>Fichier (7 Mio<br>maximum) <svg class="ml-[2px] inline w-[9px] h-[14px]"><use href="#i-info"/></svg></span></div>
                        <div class="pl-[5px] pr-[5px] pt-[10px] font-normal">
                            <div class="flex h-[79px] flex-col items-center border border-dashed border-[#cccccc] pt-[17px] text-[12.500px] leading-[14px]">
                                Glissez et déposez votre fichier ici, ou
                                <span class="mt-[-3px] flex h-[24px] w-[223px] items-center rounded-[3px] border border-[#dddddd] pl-[6px]">
                                    <span class="flex h-[18px] w-[72px] items-center justify-center border border-[#aaaaaa] bg-[#e1e1e1] text-[11px]">Parcourir...</span>
                                    <span class="ml-[6px] text-[11px]">Aucun fichier sélectionné.</span>
                                </span>
                            </div>
                        </div>
                    </div>
                </section>

                <div class="mt-[6px] flex h-[27px] text-white">
                    <a class="ml-[342px] flex w-[85px] items-center justify-center bg-[#1f2238]">Sauvegarder</a>
                    <a class="ml-[56px] flex w-[124px] items-center justify-center bg-[#1f2238]">Mettre à la corbeille</a>
                </div>
            </div>
        </div>
    </main>

    <!-- back to top -->
    <a class="absolute left-[1638px] top-[1706px] flex h-[28px] w-[28px] items-center justify-center rounded-full bg-[#1f2238]">
        <svg class="w-[14px] h-[14px]" viewBox="0 0 14 14" fill="none" stroke="white" stroke-width="2.400"><path d="M2 7l5-5 5 5M7 2v11"/></svg>
    </a>

    <footer class="absolute bottom-0 left-0 right-0 flex h-[28px] items-center justify-end bg-[#e1e0dc] pr-[6px] [font-family:'DejaVu_Sans',sans-serif] text-[11.600px] font-bold text-[#1f2238]">
        GLPI 9.5.3 Copyright (C) 2015-2020 Teclib' and contributors
    </footer>
</body>
</html>
